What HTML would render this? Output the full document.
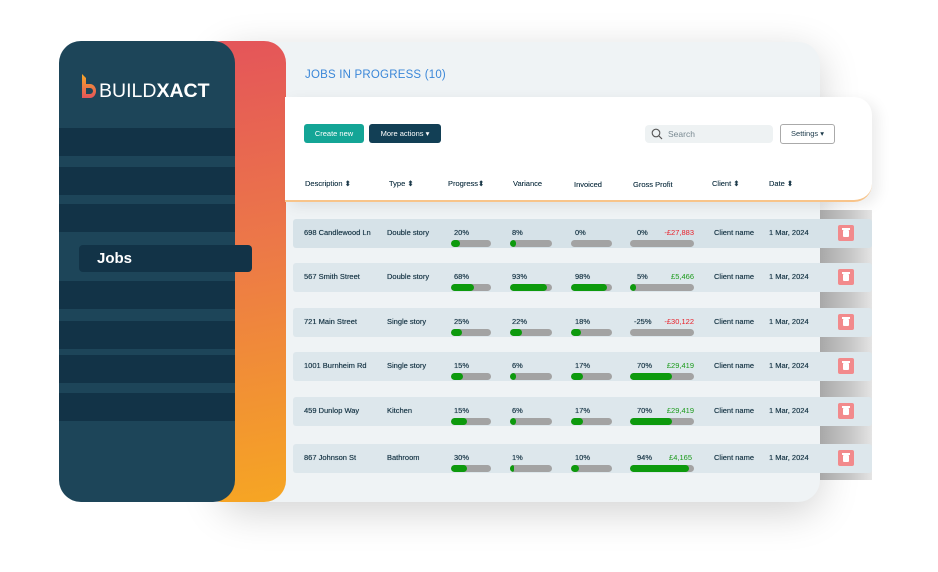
<!DOCTYPE html>
<html><head><meta charset="utf-8"><style>
*{margin:0;padding:0;box-sizing:border-box}
body{width:938px;height:572px;background:#fff;position:relative;overflow:hidden;font-family:"Liberation Sans",sans-serif;}
.abs{position:absolute}
.main{left:220px;top:42px;width:600px;height:460px;background:#eff3f5;border-radius:22px;box-shadow:0 10px 40px rgba(0,0,0,.18)}
.grad{left:200px;top:41px;width:86px;height:461px;border-radius:22px;background:linear-gradient(170deg,#e4545a 0%,#ec7848 45%,#f6a623 100%)}
.side{left:59px;top:41px;width:176px;height:461px;background:#1d4559;border-radius:22px;overflow:hidden}
.band{position:absolute;left:0;width:176px;height:28px;background:#123347}
.jobs{left:79px;top:245px;width:173px;height:27px;background:#123347;border-radius:4px;color:#fff;font-weight:bold;font-size:15px;line-height:27px;padding-left:18px}
.title{left:305px;top:69px;color:#3b87d8;font-size:11.5px;letter-spacing:.2px}
.hdr{left:285px;top:97px;width:587px;height:105px;background:#fff;border-radius:0 18px 18px 0;border-bottom:2px solid #f8c48a;box-shadow:6px 4px 14px rgba(0,0,0,.08)}
.btn{position:absolute;top:27px;height:19px;border-radius:3px;color:#fff;font-size:7.5px;line-height:19px;text-align:center}
.th{position:absolute;top:82px;font-size:7.5px;color:#1c3a4a;text-shadow:0 0 .3px #1c3a4a}
.rowshadow{left:820px;top:210px;width:52px;height:270px;background:linear-gradient(90deg,#a8a8a8,#c8c8c8 60%,#e4e4e4)}
.row{position:absolute;left:293px;width:579px;height:29px;background:#dde7ec;border-radius:3px;font-size:7.5px;color:#1c3a4a;text-shadow:0 0 .4px #1c3a4a}
.row span{position:absolute;top:9px;white-space:nowrap}
.bar{position:absolute;top:21px;height:7px;border-radius:4px;background:#a3a3a3;overflow:hidden}
.bar i{display:block;height:7px;background:#0d9a0d;border-radius:4px}
.trash{position:absolute;left:545px;top:6px;width:16px;height:16px;background:#f28a8c;border-radius:2px}
.trash::after{content:"";position:absolute;left:5px;top:5px;width:6px;height:7px;background:#fff;border-radius:1px}
.trash::before{content:"";position:absolute;left:4px;top:3px;width:8px;height:1.5px;background:#fff}
.red{color:#e8202a;text-shadow:none}.grn{color:#1a9a1a;text-shadow:none}
</style></head><body>
<div class="abs main"></div>
<div class="abs grad"></div>
<div class="abs side">
 <div class="band" style="top:87px"></div>
 <div class="band" style="top:126px"></div>
 <div class="band" style="top:163px"></div>
 <div class="band" style="top:240px"></div>
 <div class="band" style="top:280px"></div>
 <div class="band" style="top:314px"></div>
 <div class="band" style="top:352px"></div>
</div>
<svg class="abs" style="left:81px;top:74px" width="16" height="26" viewBox="0 0 16 26"><defs><linearGradient id="g" x1="0" y1="0" x2="0" y2="1"><stop offset="0" stop-color="#f7a827"/><stop offset="1" stop-color="#e4545a"/></linearGradient></defs><path d="M1 0 L5 4 L5 10 L9 10 A6 7 0 0 1 9 24 L1 24 Z M5 14 L5 20 L9 20 A3 3 0 0 0 9 14 Z" fill="url(#g)"/></svg>
<div class="abs" style="left:99px;top:80px;color:#fff;font-size:19.5px;letter-spacing:0;line-height:22px">BUILD<b>XACT</b></div>
<div class="abs jobs">Jobs</div>
<div class="abs title">JOBS IN PROGRESS (10)</div>
<div class="abs hdr">
 <div class="btn" style="left:19px;width:60px;background:#14a596">Create new</div>
 <div class="btn" style="left:84px;width:72px;background:#123f55">More actions ▾</div>
 <div style="position:absolute;left:360px;top:28px;width:128px;height:18px;background:#eef2f3;border-radius:4px;font-size:8.5px;color:#7a8a92;line-height:18px;padding-left:23px">Search
  <svg style="position:absolute;left:6px;top:3px" width="12" height="12" viewBox="0 0 12 12"><circle cx="5" cy="5" r="3.8" fill="none" stroke="#555" stroke-width="1.1"/><path d="M8 8 L11 11" stroke="#555" stroke-width="1.2"/></svg></div>
 <div style="position:absolute;left:495px;top:27px;width:55px;height:20px;border:1px solid #aaa;border-radius:3px;font-size:7.5px;color:#1c3a4a;line-height:18px;text-align:center">Settings ▾</div>
 <div class="th" style="left:20px">Description ⬍</div>
 <div class="th" style="left:104px">Type ⬍</div>
 <div class="th" style="left:163px">Progress⬍</div>
 <div class="th" style="left:228px">Variance</div>
 <div class="th" style="left:289px;top:83px">Invoiced</div>
 <div class="th" style="left:348px;top:83px">Gross Profit</div>
 <div class="th" style="left:427px">Client ⬍</div>
 <div class="th" style="left:484px">Date ⬍</div>
</div>
<div class="abs rowshadow"></div>

<div class="row" style="top:219px;background:#d6e2e8"><span style="left:11px">698 Candlewood Ln</span><span style="left:94px">Double story</span><span style="left:161px">20%</span><span style="left:219px">8%</span><span style="left:282px">0%</span><span style="left:344px">0%</span><span class="red" style="right:178px">-£27,883</span><span style="left:421px">Client name</span><span style="left:476px">1 Mar, 2024</span>
<div class="bar" style="left:158px;width:40px"><i style="width:9px"></i></div><div class="bar" style="left:217px;width:42px"><i style="width:6px"></i></div><div class="bar" style="left:278px;width:41px"><i style="width:0"></i></div><div class="bar" style="left:337px;width:64px"><i style="width:0"></i></div><div class="trash"></div></div>

<div class="row" style="top:263px"><span style="left:11px">567 Smith Street</span><span style="left:94px">Double story</span><span style="left:161px">68%</span><span style="left:219px">93%</span><span style="left:282px">98%</span><span style="left:344px">5%</span><span class="grn" style="right:178px">£5,466</span><span style="left:421px">Client name</span><span style="left:476px">1 Mar, 2024</span>
<div class="bar" style="left:158px;width:40px"><i style="width:23px"></i></div><div class="bar" style="left:217px;width:42px"><i style="width:37px"></i></div><div class="bar" style="left:278px;width:41px"><i style="width:36px"></i></div><div class="bar" style="left:337px;width:64px"><i style="width:6px"></i></div><div class="trash"></div></div>

<div class="row" style="top:308px"><span style="left:11px">721 Main Street</span><span style="left:94px">Single story</span><span style="left:161px">25%</span><span style="left:219px">22%</span><span style="left:282px">18%</span><span style="left:341px">-25%</span><span class="red" style="right:178px">-£30,122</span><span style="left:421px">Client name</span><span style="left:476px">1 Mar, 2024</span>
<div class="bar" style="left:158px;width:40px"><i style="width:11px"></i></div><div class="bar" style="left:217px;width:42px"><i style="width:12px"></i></div><div class="bar" style="left:278px;width:41px"><i style="width:10px"></i></div><div class="bar" style="left:337px;width:64px"><i style="width:0"></i></div><div class="trash"></div></div>

<div class="row" style="top:352px"><span style="left:11px">1001 Burnheim Rd</span><span style="left:94px">Single story</span><span style="left:161px">15%</span><span style="left:219px">6%</span><span style="left:282px">17%</span><span style="left:344px">70%</span><span class="grn" style="right:178px">£29,419</span><span style="left:421px">Client name</span><span style="left:476px">1 Mar, 2024</span>
<div class="bar" style="left:158px;width:40px"><i style="width:12px"></i></div><div class="bar" style="left:217px;width:42px"><i style="width:6px"></i></div><div class="bar" style="left:278px;width:41px"><i style="width:12px"></i></div><div class="bar" style="left:337px;width:64px"><i style="width:42px"></i></div><div class="trash"></div></div>

<div class="row" style="top:397px"><span style="left:11px">459 Dunlop Way</span><span style="left:94px">Kitchen</span><span style="left:161px">15%</span><span style="left:219px">6%</span><span style="left:282px">17%</span><span style="left:344px">70%</span><span class="grn" style="right:178px">£29,419</span><span style="left:421px">Client name</span><span style="left:476px">1 Mar, 2024</span>
<div class="bar" style="left:158px;width:40px"><i style="width:16px"></i></div><div class="bar" style="left:217px;width:42px"><i style="width:6px"></i></div><div class="bar" style="left:278px;width:41px"><i style="width:12px"></i></div><div class="bar" style="left:337px;width:64px"><i style="width:42px"></i></div><div class="trash"></div></div>

<div class="row" style="top:444px"><span style="left:11px">867 Johnson St</span><span style="left:94px">Bathroom</span><span style="left:161px">30%</span><span style="left:219px">1%</span><span style="left:282px">10%</span><span style="left:344px">94%</span><span class="grn" style="right:180px">£4,165</span><span style="left:421px">Client name</span><span style="left:476px">1 Mar, 2024</span>
<div class="bar" style="left:158px;width:40px"><i style="width:16px"></i></div><div class="bar" style="left:217px;width:42px"><i style="width:4px"></i></div><div class="bar" style="left:278px;width:41px"><i style="width:8px"></i></div><div class="bar" style="left:337px;width:64px"><i style="width:59px"></i></div><div class="trash"></div></div>
</body></html>
